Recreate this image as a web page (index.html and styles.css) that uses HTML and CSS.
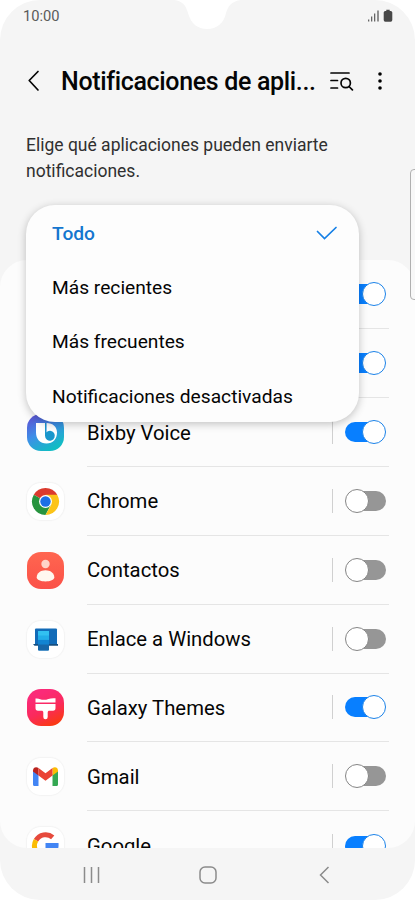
FILE: index.html
```html
<!doctype html>
<html lang="es">
    <head>
        <meta charset="UTF-8" />
        <meta name="viewport" content="width=device-width, initial-scale=1.0" />
        <title>Notificaciones de aplicaciones</title>
        <link rel="stylesheet" href="styles.css">
    </head>
    <body>
        <div class="phone">
            <svg class="notch" width="68" height="30" viewBox="0 0 68 30">
                <path d="M0 0 C9 1 12 6 14 13 C17 24 24 29 33 29 C43 29 50 23 52 13 C54 6 58 1 67 0 Z" fill="#fff" />
            </svg>

            <div class="status-bar">
                <span class="clock">10:00</span>
                <svg width="25" height="14" viewBox="0 0 25 14" fill="#666">
                    <path d="M0 10.5h1.300v2H0zM3 7.500h1.300v5H3zM6 4.500h1.300v8H6zM9.300 1.500h1.400v11H9.300z" />
                    <path d="M18.300.7h3.400v1.200h1a1.600 1.600 0 0 1 1.600 1.600v7.600a1.600 1.600 0 0 1-1.600 1.600h-5.400a1.600 1.600 0 0 1-1.600-1.600V3.500a1.600 1.600 0 0 1 1.600-1.600h1z" fill="#484848" />
                </svg>
            </div>

            <header class="app-bar">
                <svg class="back" width="13" height="22" viewBox="0 0 13 22">
                    <path d="M11 1.500 2.200 10.500 11 20" />
                </svg>
                <h1>Notificaciones de apli...</h1>
                <svg class="search" width="24" height="20" viewBox="0 0 24 20">
                    <path d="M1 2h18M1 9.500h6.500M1 17h6.500" />
                    <circle cx="15.700" cy="12" r="4.700" />
                    <path d="m19 15.500 3.400 3.400" />
                </svg>
                <svg class="more" width="4" height="18" viewBox="0 0 4 18">
                    <circle cx="2" cy="2" r="1.800" />
                    <circle cx="2" cy="9" r="1.800" />
                    <circle cx="2" cy="16" r="1.800" />
                </svg>
            </header>

            <p class="intro">Elige qué aplicaciones pueden enviarte notificaciones.</p>

            <ul class="apps">
                <li class="app">
                    <span class="icon"></span>
                    <div class="row"><span class="name"></span><i class="toggle on"></i></div>
                </li>
                <li class="app">
                    <span class="icon"></span>
                    <div class="row"><span class="name"></span><i class="toggle on"></i></div>
                </li>
                <li class="app">
                    <span class="icon bixby">
                        <svg width="37" height="37" viewBox="0 0 37 37">
                            <path d="M9 9h9v10.500h1.500V9C26 9 30 13 30 18.500 30 25 26 29.500 19.500 29.500S9 25 9 18.500z" fill="#fff" />
                            <path d="M18 9h1.200v9.500a4.900 4.900 0 1 1-1.200 3.200z" fill="#1a97cc" />
                        </svg>
                    </span>
                    <div class="row"><span class="name">Bixby Voice</span><i class="toggle on"></i></div>
                </li>
                <li class="app">
                    <span class="icon light">
                        <svg width="37" height="37" viewBox="0 0 37 37">
                            <path d="M18.500 18.500 6.800 11.750A13.500 13.500 0 0 1 30.200 11.750z" fill="#db3a2e" />
                            <path d="M6.800 11.750A13.500 13.500 0 0 0 18.500 32L24 21.500 18.500 18.500z" fill="#27943f" />
                            <path d="M30.200 11.750H18.500L24.200 21.800 18.500 32A13.500 13.500 0 0 0 30.200 11.750z" fill="#fcc419" />
                            <circle cx="18.500" cy="18.500" r="6.500" fill="#fff" />
                            <circle cx="18.500" cy="18.500" r="5.200" fill="#1a6fe6" />
                        </svg>
                    </span>
                    <div class="row"><span class="name">Chrome</span><i class="toggle"></i></div>
                </li>
                <li class="app">
                    <span class="icon contacts">
                        <svg width="37" height="37" viewBox="0 0 37 37">
                            <circle cx="18.500" cy="12" r="4.200" fill="#ffd3c9" />
                            <path d="M9.700 25.200c0-4.200 4-7 8.800-7s8.800 2.800 8.800 7c0 2.500-4 4.200-8.800 4.200s-8.800-1.700-8.800-4.200z" fill="#fff8ef" />
                        </svg>
                    </span>
                    <div class="row"><span class="name">Contactos</span><i class="toggle"></i></div>
                </li>
                <li class="app">
                    <span class="icon light">
                        <svg width="37" height="37" viewBox="0 0 37 37">
                            <rect x="8" y="7.500" width="22" height="16.500" rx="1" fill="#126bb8" />
                            <path d="M6 23h25v1.700H7.500z" fill="#174f80" />
                            <rect x="11" y="10" width="11" height="19.500" rx="1" fill="#1284d2" />
                            <rect x="11" y="10" width="11" height="8.500" fill="#32c1f1" />
                            <rect x="11" y="14.500" width="11" height="4" fill="#22aee9" />
                            <path d="M11 23.500h11v5a1 1 0 0 1-1 1h-9a1 1 0 0 1-1-1z" fill="#1767a9" />
                        </svg>
                    </span>
                    <div class="row"><span class="name">Enlace a Windows</span><i class="toggle"></i></div>
                </li>
                <li class="app">
                    <span class="icon themes">
                        <svg width="37" height="37" viewBox="0 0 37 37" fill="#fff">
                            <path d="M8.500 9.500c3.500-.5 5 1.300 8.500 1.300S23.500 8.500 28.500 9.300v4.200h-20z" />
                            <path d="M8.500 15h20v4c0 1.800-.8 2.700-2.500 2.700h-3.500c-1.200 0-1.800.6-1.800 1.700V28a2.200 2.200 0 0 1-4.400 0v-4.600c0-1.100-.6-1.700-1.800-1.700H11c-1.700 0-2.500-.9-2.500-2.700z" />
                        </svg>
                    </span>
                    <div class="row"><span class="name">Galaxy Themes</span><i class="toggle on"></i></div>
                </li>
                <li class="app">
                    <span class="icon light">
                        <svg width="37" height="37" viewBox="0 0 37 37">
                            <path d="M6 12.500 11.500 16v12H7.500A1.500 1.500 0 0 1 6 26.500z" fill="#4285f4" />
                            <path d="M31 12.500 25.500 16v12h4a1.500 1.500 0 0 0 1.500-1.500z" fill="#34a853" />
                            <path d="M6 12.500c0-3 3-4.200 5.500-2.500v7.500L6 13.500z" fill="#b9231f" />
                            <path d="M31 12.500c0-3-3-4.200-5.500-2.500v7.500l5.500-4z" fill="#fbbc04" />
                            <path d="m11.500 10 7 5.300 7-5.300v7.500l-7 5.300-7-5.300z" fill="#ea4335" />
                        </svg>
                    </span>
                    <div class="row"><span class="name">Gmail</span><i class="toggle"></i></div>
                </li>
                <li class="app">
                    <span class="icon light">
                        <svg width="37" height="37" viewBox="0 0 37 37">
                            <g fill="none" stroke-width="5">
                                <path d="M9 13.300A11 11 0 0 1 25.700 10.300" stroke="#e64a3c" />
                                <path d="M9 13.300a11 11 0 0 0 0 11" stroke="#fbbc05" />
                                <path d="M9 24.300a11 11 0 0 0 17 2.500" stroke="#34a853" />
                            </g>
                            <path d="M18.500 16h13c.5 5-1 9-4 12l-4-3c1.500-1 2.400-2.500 2.700-4h-7.700z" fill="#4285f4" />
                        </svg>
                    </span>
                    <div class="row"><span class="name">Google</span><i class="toggle on"></i></div>
                </li>
            </ul>

            <nav class="nav-bar">
                <svg width="18" height="18" viewBox="0 0 18 18"><path d="M2.500 1v16M9.500 1v16M16.500 1v16" /></svg>
                <svg width="18" height="18" viewBox="0 0 18 18"><rect x="1" y="1" width="16" height="16" rx="5" /></svg>
                <svg width="18" height="18" viewBox="0 0 18 18"><path d="m13.500 1-8 8 8 8" /></svg>
            </nav>

            <div class="edge-handle"></div>

            <div class="menu">
                <div class="option selected">
                    <span>Todo</span>
                    <svg width="22" height="14" viewBox="0 0 22 14"><path d="m1.500 5.500 7 7 11.500-11" /></svg>
                </div>
                <div class="option">Más recientes</div>
                <div class="option">Más frecuentes</div>
                <div class="option">Notificaciones desactivadas</div>
            </div>
        </div>
    </body>
</html>
```
FILE: styles.css
```css
* {
    box-sizing: border-box;
}
body {
    margin: 0;
    background: #fff;
    font-family: Roboto, sans-serif;
    color: #050505;
}
.phone {
    position: relative;
    display: flex;
    flex-direction: column;
    width: 415px;
    height: 900px;
    background: #f5f5f5;
    border-radius: 40px;
    overflow: hidden;
}
.notch {
    position: absolute;
    top: 0;
    left: 174px;
}
.status-bar {
    display: flex;
    justify-content: space-between;
    align-items: center;
    height: 32px;
    padding: 0 22px 0 23px;
}
.clock {
    font-size: 14.7px;
    color: #5a5a5a;
}
.app-bar {
    display: flex;
    align-items: center;
    height: 98px;
    padding: 0 33px 0 27px;
}
.app-bar svg {
    flex: none;
}
.back,
.search {
    fill: none;
    stroke: #050505;
    stroke-width: 1.7;
    stroke-linecap: round;
    stroke-linejoin: round;
}
.app-bar h1 {
    width: 269px;
    margin: 0 0 0 21px;
    padding-top: 1px;
    font-size: 25px;
    font-weight: 500;
    letter-spacing: -0.34px;
    white-space: nowrap;
}
.more {
    margin-left: 24px;
}
.intro {
    height: 130px;
    margin: 0;
    padding: 3px 60px 0 26px;
    font-size: 17.5px;
    line-height: 25.5px;
    color: #303030;
}
.apps {
    flex: none;
    height: 588px;
    margin: 0;
    padding: 0.5px 0 0;
    list-style: none;
    background: #fcfcfc;
    border-radius: 27px;
    overflow: hidden;
}
.app {
    display: flex;
    align-items: center;
    height: 68.85px;
    padding: 0 26px 0 27px;
}
.icon {
    flex: none;
    width: 37px;
    height: 37px;
    border-radius: 14px;
    overflow: hidden;
}
.icon svg {
    display: block;
}
.light {
    background: #fff;
    box-shadow: 0 0 1px 1px #f3f3f3;
}
.bixby {
    background: linear-gradient(150deg, #5a58d6 10%, #3e8fe8 45%, #12bcc4 85%);
}
.contacts {
    background: linear-gradient(#ff6650, #fb5148);
}
.themes {
    background: linear-gradient(155deg, #fb2a78 20%, #fa2a5c 55%, #fa3a10 90%);
}
.row {
    flex: 1;
    display: flex;
    align-items: center;
    height: 100%;
    margin-left: 23px;
    padding-right: 3px;
    border-bottom: 1px solid #e5e5e5;
}
.app:last-child .row {
    border: 0;
}
.name {
    flex: 1;
    padding-top: 1px;
    font-size: 20.3px;
}
.toggle {
    position: relative;
    width: 54px;
    height: 24px;
    border-left: 1px solid #d0d0d0;
}
.toggle::before {
    content: "";
    position: absolute;
    top: 2px;
    right: 0;
    width: 40px;
    height: 20px;
    border-radius: 10px;
    background: #969696;
}
.toggle::after {
    content: "";
    position: absolute;
    top: 0;
    right: 17px;
    width: 22px;
    height: 22px;
    border: 1px solid #858585;
    border-radius: 50%;
    background: #fff;
}
.toggle.on::before {
    right: 1px;
    background: #087fff;
}
.toggle.on::after {
    right: 0;
    border-color: #1b82e8;
}
.nav-bar {
    display: flex;
    justify-content: space-between;
    align-items: center;
    height: 52px;
    padding: 1px 82px 0;
}
.nav-bar svg {
    fill: none;
    stroke: #8b8b8b;
    stroke-width: 1.5;
}
.edge-handle {
    position: absolute;
    top: 169px;
    left: 410px;
    width: 10px;
    height: 131px;
    border: 1px solid #b0b0b0;
    border-radius: 4px;
    background: #f8f8f8;
}
.menu {
    position: absolute;
    top: 205px;
    left: 26px;
    width: 333px;
    height: 217px;
    background: #fdfdfd;
    border-radius: 29px;
    box-shadow: 0 2px 8px rgba(0, 0, 0, 0.24);
}
.option {
    display: flex;
    justify-content: space-between;
    align-items: center;
    height: 54.3px;
    padding: 2px 21px 0 26px;
    font-size: 19.2px;
}
.selected {
    font-weight: 500;
    color: #1476cf;
}
.selected svg {
    fill: none;
    stroke: #1680e6;
    stroke-width: 1.7;
    stroke-linecap: round;
}
```
